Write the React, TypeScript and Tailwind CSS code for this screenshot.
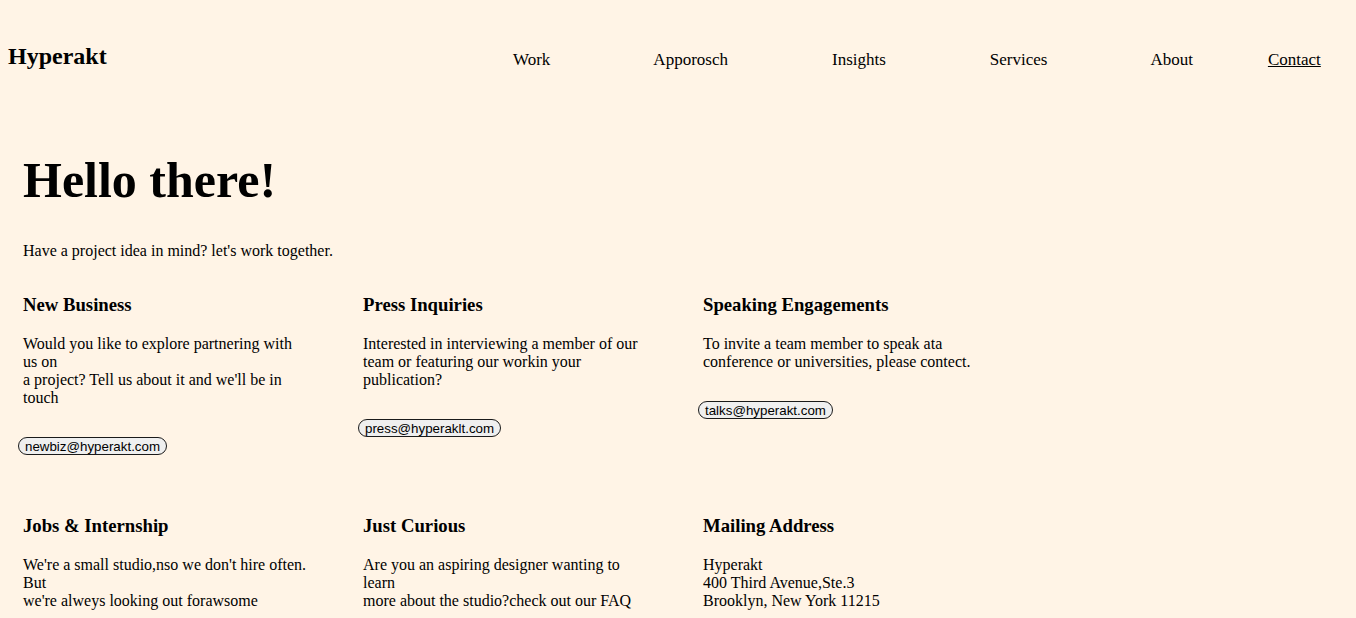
import React from "react";

const serif = { fontFamily: '"Liberation Serif", "Times New Roman", serif' };

function Pill({ children }: { children: React.ReactNode }) {
  return (
    <button
      className="-ml-[5px] mt-[30px] h-[18px] rounded-[10px] border border-[#1a1a1a] bg-[#efefef] px-[6px] text-[13.333px] leading-[15px] text-black"
      style={{ fontFamily: '"Liberation Sans", Arial, sans-serif' }}
    >
      {children}
    </button>
  );
}

function Card({
  title,
  children,
  email,
}: {
  title: string;
  children: React.ReactNode;
  email?: string;
}) {
  return (
    <div className="flex flex-col items-start">
      <h3 className="text-[18.72px] font-bold leading-[22px]">{title}</h3>
      <p className="mt-[19px] w-[285px] text-[16px] leading-[18px]">{children}</p>
      {email && <Pill>{email}</Pill>}
    </div>
  );
}

export default function App() {
  const nav = [
    { t: "Work", m: "" },
    { t: "Apporosch", m: "ml-[103px]" },
    { t: "Insights", m: "ml-[104px]" },
    { t: "Services", m: "ml-[104px]" },
    { t: "About", m: "ml-[103px]" },
  ];
  return (
    <div className="min-h-screen bg-[#fff4e6] text-black" style={serif}>
      <header className="flex items-start px-[8px] pt-[42px]">
        <div className="w-[505px] text-[24px] font-bold leading-[28px]">Hyperakt</div>
        <nav className="flex pt-[8px] text-[17px] leading-[19px]">
          {nav.map((n) => (
            <a key={n.t} className={n.m}>
              {n.t}
            </a>
          ))}
          <a className="ml-[75px] underline">Contact</a>
        </nav>
      </header>

      <main className="pl-[23px] pb-[40px]">
        <h1 className="mt-[81px] text-[50px] font-bold leading-[58px]">Hello there!</h1>
        <p className="mt-[33px] text-[16px] leading-[18px]">
          Have a project idea in mind? let's work together.
        </p>

        <div className="mt-[34px] grid grid-cols-[340px_340px_340px] items-start gap-y-[60px]">
          <Card title="New Business" email="newbiz@hyperakt.com">
            Would you like to explore partnering with us on
            <br />a project? Tell us about it and we'll be in touch
          </Card>
          <Card title="Press Inquiries" email="press@hyperaklt.com">
            Interested in interviewing a member of our team or featuring our workin your
            publication?
          </Card>
          <Card title="Speaking Engagements" email="talks@hyperakt.com">
            To invite a team member to speak ata conference or universities, please contect.
          </Card>

          <Card title="Jobs & Internship">
            We're a small studio,nso we don't hire often. But
            <br />
            we're alweys looking out forawsome
          </Card>
          <Card title="Just Curious">
            Are you an aspiring designer wanting to learn
            <br />
            more about the studio?check out our FAQ
          </Card>
          <Card title="Mailing Address">
            Hyperakt
            <br />
            400 Third Avenue,Ste.3
            <br />
            Brooklyn, New York 11215
          </Card>
        </div>
      </main>
    </div>
  );
}
